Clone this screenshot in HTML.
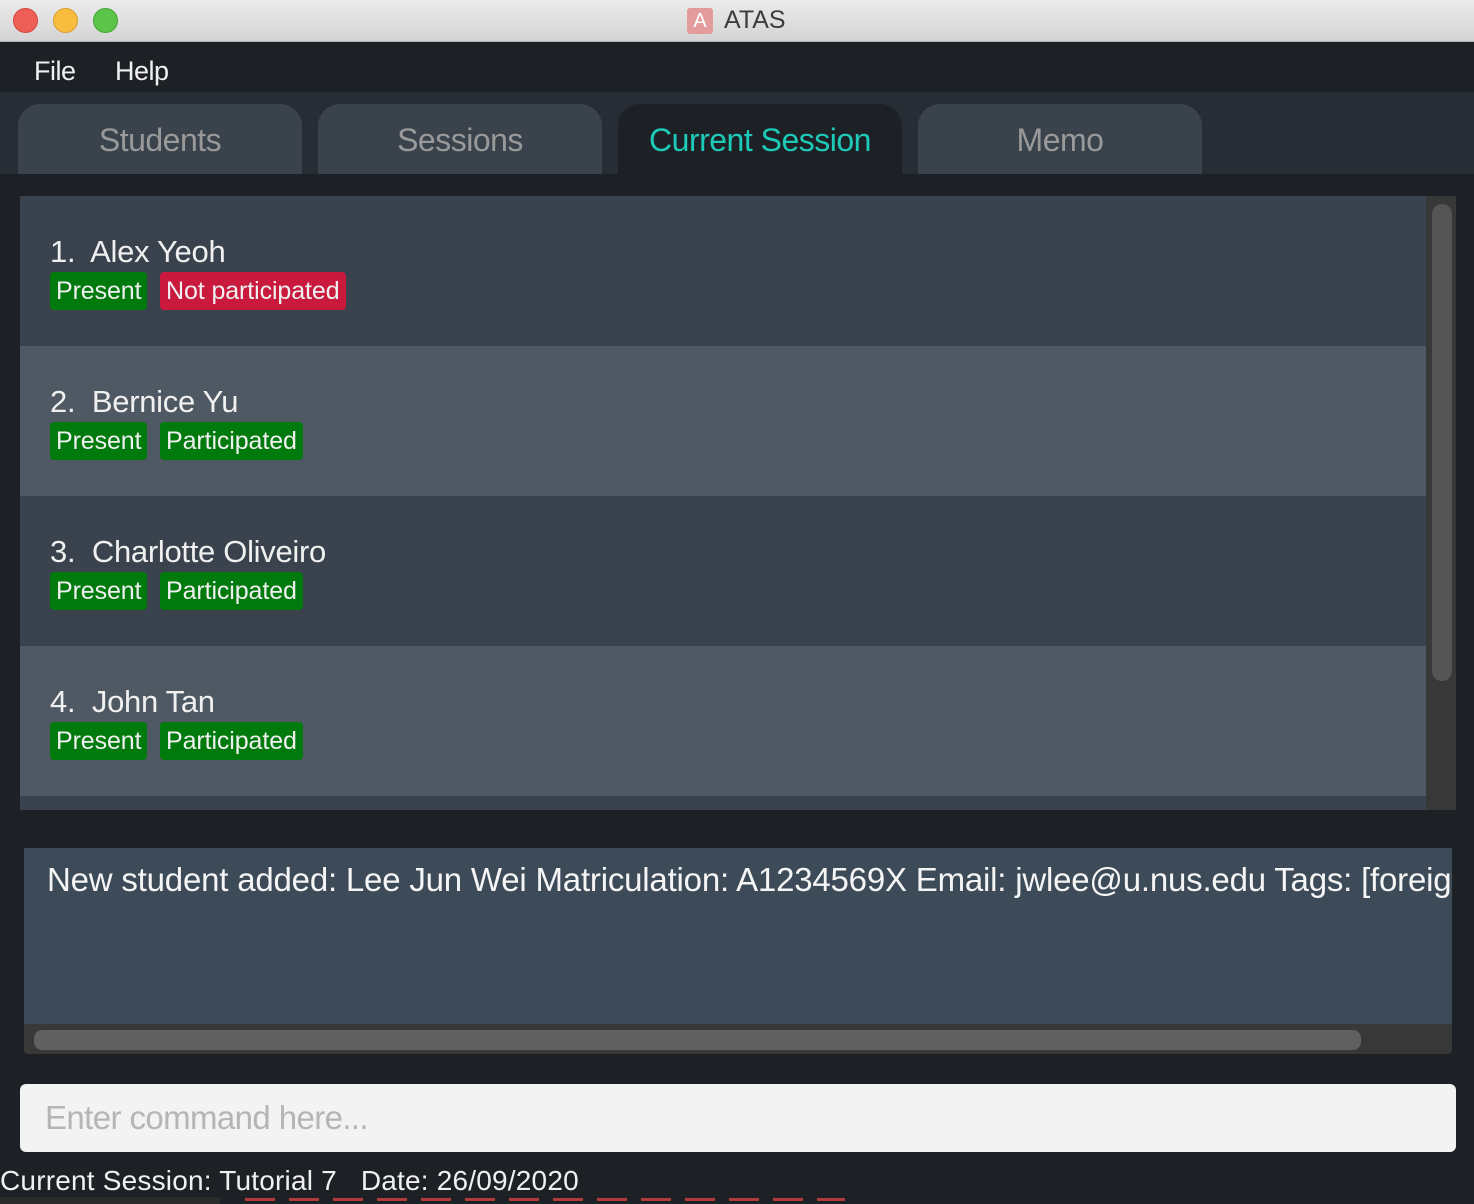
<!DOCTYPE html><html><head><style>
*{margin:0;padding:0;box-sizing:border-box}
body{width:1474px;height:1204px;overflow:hidden;background:#1d2126;font-family:"Liberation Sans",sans-serif;position:relative;color:#fff}
.abs{position:absolute}
.title{left:0;top:0;width:1474px;height:42px;background:linear-gradient(#ebebeb,#d4d4d4);border-bottom:1px solid #b0b0b0}
.dot{top:8px;width:25px;height:25px;border-radius:50%}
.tab{top:104px;width:284px;height:70px;background:#3a434c;border-radius:22px 22px 0 0;font-size:32px;color:#999;text-align:center;line-height:72px;letter-spacing:-0.5px}
.row{left:20px;width:1406px;height:150px}
.name{position:absolute;left:30px;top:38px;font-size:31px;color:#f0f0f0;letter-spacing:-0.3px}
.tag{position:absolute;top:76px;height:38px;line-height:38px;font-size:25px;padding:0 6px;border-radius:4px;color:#f0f0f0;letter-spacing:-0.1px}
.g{background:#007a0c}.r{background:#c91a3e}
</style></head><body>
<div class="abs title"></div>
<div class="abs dot" style="left:13px;background:#ee5f57;border:1px solid #d6443d"></div>
<div class="abs dot" style="left:53px;background:#f8bd3e;border:1px solid #d99e2b"></div>
<div class="abs dot" style="left:93px;background:#5cc449;border:1px solid #43a534"></div>
<div class="abs" style="left:687px;top:8px;width:26px;height:26px;background:#e49b9b;border-radius:3px;color:#fff;font-size:20px;text-align:center;line-height:26px">A</div>
<div class="abs" style="left:724px;top:6px;font-size:25px;color:#3d3d3d">ATAS</div>
<div class="abs" style="left:0;top:43px;width:1474px;height:49px;background:#1d2126"></div>
<div class="abs" style="left:34px;top:56px;font-size:27px;color:#f0f0f0;letter-spacing:-0.5px">File</div>
<div class="abs" style="left:115px;top:56px;font-size:27px;color:#f0f0f0;letter-spacing:-0.5px">Help</div>
<div class="abs" style="left:0;top:92px;width:1474px;height:82px;background:#262d35"></div>
<div class="abs tab" style="left:18px">Students</div>
<div class="abs tab" style="left:318px">Sessions</div>
<div class="abs tab" style="left:618px;background:#1d2126;color:#1dc9b7">Current Session</div>
<div class="abs tab" style="left:918px">Memo</div>
<div class="abs" style="left:20px;top:196px;width:1436px;height:614px;background:#383838"></div>
<div class="abs row" style="top:196px;background:#3a434d"><div class="name">1.&nbsp; Alex Yeoh</div><div class="tag g" style="left:30px">Present</div><div class="tag r" style="left:140px">Not participated</div></div>
<div class="abs row" style="top:346px;background:#4e5963"><div class="name">2.&nbsp; Bernice Yu</div><div class="tag g" style="left:30px">Present</div><div class="tag g" style="left:140px">Participated</div></div>
<div class="abs row" style="top:496px;background:#3a434d"><div class="name">3.&nbsp; Charlotte Oliveiro</div><div class="tag g" style="left:30px">Present</div><div class="tag g" style="left:140px">Participated</div></div>
<div class="abs row" style="top:646px;background:#4e5963"><div class="name">4.&nbsp; John Tan</div><div class="tag g" style="left:30px">Present</div><div class="tag g" style="left:140px">Participated</div></div>
<div class="abs row" style="top:796px;height:14px;background:#3a434d"></div>
<div class="abs" style="left:1432px;top:204px;width:20px;height:477px;background:#555;border-radius:10px"></div>
<div class="abs" style="left:24px;top:848px;width:1428px;height:206px;background:#383838;border-radius:0 0 4px 4px"></div>
<div class="abs" style="left:24px;top:848px;width:1428px;height:176px;background:#3d4b59;overflow:hidden"><div style="position:absolute;left:23px;top:13px;font-size:33px;white-space:nowrap;color:#f5f5f5;letter-spacing:-0.2px">New student added: Lee Jun Wei Matriculation: A1234569X Email: jwlee@u.nus.edu Tags: [foreign]</div></div>
<div class="abs" style="left:34px;top:1030px;width:1327px;height:20px;background:#606060;border-radius:8px"></div>
<div class="abs" style="left:20px;top:1084px;width:1436px;height:68px;background:#f3f3f3;border-radius:6px"><div style="position:absolute;left:25px;top:15px;font-size:33px;color:#b5b5b5;letter-spacing:-0.6px">Enter command here...</div></div>
<div class="abs" style="left:0;top:1165px;font-size:28px;color:#f0f0f0;white-space:nowrap;letter-spacing:0.2px">Current Session: Tutorial 7&nbsp;&nbsp;&nbsp;Date: 26/09/2020</div>
<div class="abs" style="left:0;top:1197px;width:220px;height:7px;background:#2b2b2b"></div>
<div class="abs" style="left:245px;top:1198px;width:600px;height:3px;background:repeating-linear-gradient(90deg,#b23a3a 0 30px,transparent 30px 44px)"></div>
</body></html>
